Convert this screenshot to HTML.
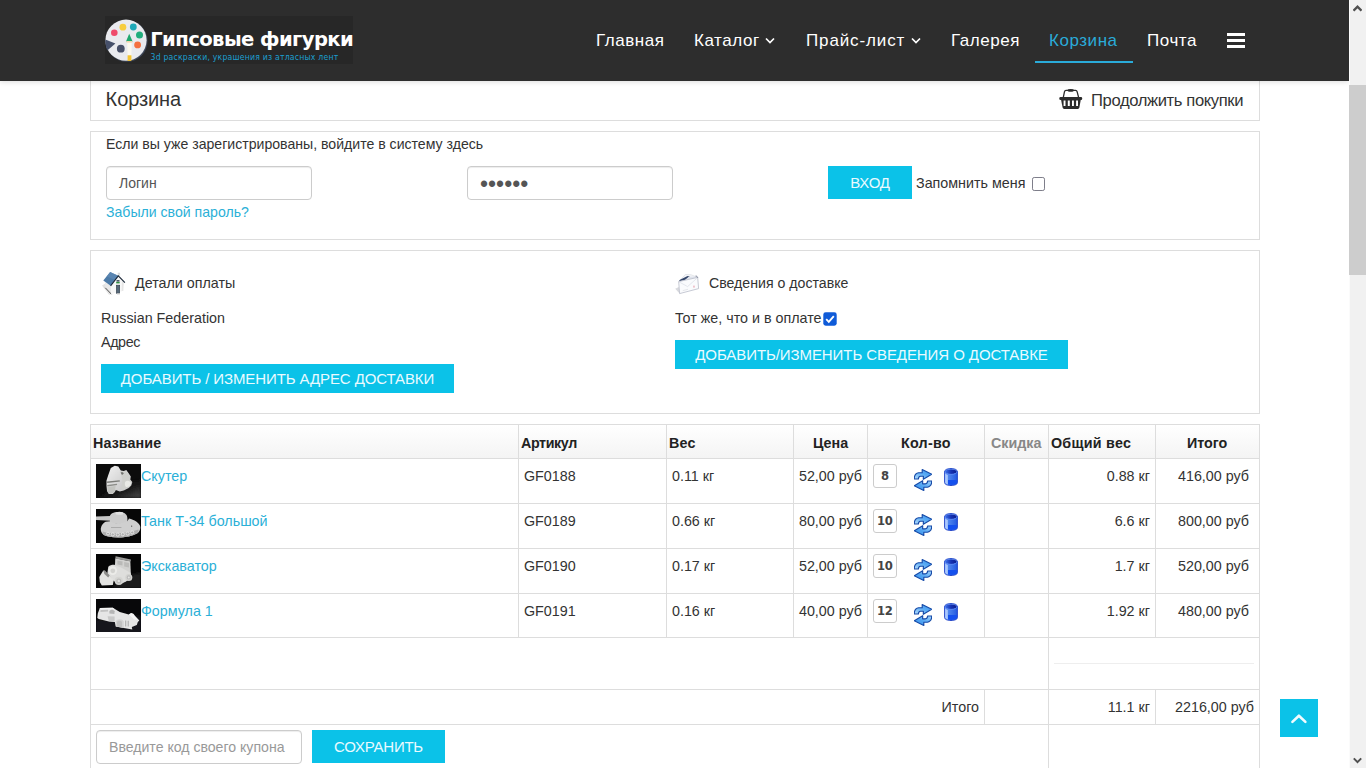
<!DOCTYPE html>
<html lang="ru">
<head>
<meta charset="utf-8">
<title>Корзина — Гипсовые фигурки</title>
<style>
*{box-sizing:border-box;margin:0;padding:0}
html,body{width:1366px;height:768px;overflow:hidden;background:#fff}
body{font-family:"Liberation Sans",sans-serif;font-size:15px;color:#333;position:relative}
a{text-decoration:none;color:#2bb0d7}
.abs{position:absolute;white-space:nowrap}

/* header */
#hdr{position:absolute;left:0;top:0;width:1349px;height:81px;background:#2d2d2d;z-index:5;box-shadow:0 1px 5px rgba(0,0,0,.14)}
#hdrshadow{position:absolute;left:0;top:81px;width:1349px;height:6px;background:linear-gradient(#e4e4e4,#fff);z-index:4;opacity:.0}
#logo{position:absolute;left:105px;top:16px;width:248px;height:48px;background:#272727}
#logo .t1{position:absolute;left:45.2px;top:12.2px;font:bold 19.6px/24px "DejaVu Sans","Liberation Sans",sans-serif;color:#fff;letter-spacing:-.58px;white-space:nowrap}
#logo .t2{position:absolute;left:45.5px;top:35.6px;font:8.6px/11px "DejaVu Sans Condensed","DejaVu Sans","Liberation Sans",sans-serif;color:#1b9fd0;white-space:nowrap;letter-spacing:.21px}
.nav{position:absolute;top:30.3px;font-size:17px;line-height:22px;color:#fff;white-space:nowrap;letter-spacing:.55px}
.nav.act{color:#2aabd9}
#navline{position:absolute;left:1035px;top:61px;width:98px;height:2.4px;background:#2aabd9}
.chev{position:absolute;top:37px;width:10px;height:8px}
#burger{position:absolute;left:1227px;top:32.5px;width:18px;height:15px}
#burger i{position:absolute;left:0;width:18px;height:3px;background:#fff}

/* scrollbar */
#sb{position:absolute;left:1349px;top:0;width:17px;height:768px;background:#f1f1f1;z-index:9;box-shadow:inset 1px 0 0 #fbfbfb}
#sb .th{position:absolute;left:0;top:85px;width:17px;height:190px;background:#cdcdcd}

/* boxes */
.box{position:absolute;left:90px;width:1170px;border:1px solid #ddd;background:#fff}
.btn{position:absolute;background:#0bc2e8;color:#eafaff;font-size:16px;line-height:30px;text-align:center;white-space:nowrap;height:30px}
.inp{position:absolute;border:1px solid #ccc;border-radius:4px;background:#fff;height:34px;font-size:15px;line-height:32px;padding-left:12px;color:#555;white-space:nowrap;box-shadow:inset 0 1px 1px rgba(0,0,0,.075)}


/* table */
#tbl{position:absolute;left:90px;top:424px;width:1170px;height:344px;font-size:14.3px;color:#333}
#tbl .thbg{position:absolute;left:1px;top:1px;width:1168px;height:33px;background:linear-gradient(#fff,#f4f4f4)}
#tbl .ln{position:absolute;background:#ddd}
#tbl .ln2{position:absolute;background:#eee}
#tbl .tx{position:absolute;white-space:nowrap;line-height:20px;font-size:14.3px}
#tbl .tx.b{font-weight:bold;color:#222}
#tbl .tx.g{color:#888}
#tbl .thumb{position:absolute;width:45px;height:34px;background:#0c0c0c;overflow:hidden}
#tbl .qty{position:absolute;width:24px;height:24px;border:1px solid #ccc;border-radius:3px;font:bold 11.6px/22px "DejaVu Sans","Liberation Sans",sans-serif;text-align:center;color:#444;background:#fff;letter-spacing:-.3px;text-indent:-.3px}
#tbl .ic{position:absolute}
</style>
</head>
<body>

<div id="hdr">
  <div id="logo">
    <svg width="48" height="48" viewBox="0 0 48 48" style="position:absolute;left:0;top:0">
      <circle cx="21.8" cy="25" r="20.8" fill="#3d4657"/>
      <circle cx="21" cy="24.2" r="20.6" fill="#e9eaee"/>
      <path d="M0.3 23.5 L10.4 27.4 L2.3 34.6 C0.8 31 0.2 27 0.3 23.5 Z" fill="#46506a"/>
      <circle cx="9.3" cy="16.8" r="3.3" fill="#ef4a6b"/>
      <circle cx="17.9" cy="11.2" r="3.4" fill="#f7cd3e"/>
      <circle cx="28.3" cy="11" r="3.4" fill="#1fa9b8"/>
      <circle cx="34.5" cy="19.1" r="3.5" fill="#22ad7d"/>
      <circle cx="32.6" cy="28.9" r="3.4" fill="#f4703f"/>
      <circle cx="15.8" cy="32.7" r="3.9" fill="#474f68"/>
      <path d="M22.2 25 L26.8 25 L26.4 39.5 L22.6 39.5 Z" fill="#fbf8ee"/>
      <path d="M24.2 17.8 L27.6 25.6 L21 25.6 Z" fill="#1fa86f"/>
      <path d="M21.4 25 h5.8 v1.6 h-5.8z" fill="#f2d5b0"/>
      <rect x="22.6" y="39.3" width="3.8" height="5.6" fill="#f5c531"/>
    </svg>
    <div class="t1">Гипсовые фигурки</div>
    <div class="t2">3d раскраски, украшения из атласных лент</div>
  </div>
  <div class="nav" style="left:596px">Главная</div>
  <div class="nav" style="left:694px">Каталог</div>
  <svg class="chev" style="left:765px" viewBox="0 0 10 8"><path d="M1 1.5 L5 5.5 L9 1.5" fill="none" stroke="#fff" stroke-width="1.7"/></svg>
  <div class="nav" style="left:806px;letter-spacing:.87px">Прайс-лист</div>
  <svg class="chev" style="left:911px" viewBox="0 0 10 8"><path d="M1 1.5 L5 5.5 L9 1.5" fill="none" stroke="#fff" stroke-width="1.7"/></svg>
  <div class="nav" style="left:951px">Галерея</div>
  <div class="nav act" style="left:1049px">Корзина</div>
  <div id="navline"></div>
  <div class="nav" style="left:1147px">Почта</div>
  <div id="burger"><i style="top:0"></i><i style="top:6px"></i><i style="top:12px"></i></div>
</div>

<div id="sb">
  <div class="th"></div>
  <svg style="position:absolute;left:4px;top:3.9px" width="9" height="8" viewBox="0 0 9 8"><path d="M0.5 6.7 L4.5 2.7 L8.5 6.7" fill="none" stroke="#505050" stroke-width="2.4"/></svg>
  <svg style="position:absolute;left:4px;top:756.5px" width="9" height="7" viewBox="0 0 9 7"><path d="M0.8 1.4 L4.5 5.1 L8.2 1.4" fill="none" stroke="#505050" stroke-width="2"/></svg>
</div>

<!-- title box -->
<div class="box" style="top:76px;height:45px">
  <div class="abs" id="t_korz" style="left:14.6px;top:9.5px;font-size:20px;line-height:24px;color:#333;letter-spacing:-.1px">Корзина</div>
  <svg class="abs" id="i_basket" style="left:968.2px;top:12px" width="24" height="21" viewBox="0 0 24 21">
    <path d="M4.3 8.4 L5.5 2.6 C5.7 1.7 6.2 1.3 7 1.3 H16.6 C17.4 1.3 17.9 1.7 18.1 2.6 L19.6 8.4" fill="none" stroke="#2b2b2b" stroke-width="1.3"/>
    <ellipse cx="11.7" cy="1.4" rx="3.2" ry="1.3" fill="#2b2b2b"/>
    <rect x="0.3" y="8.1" width="22.9" height="2.8" rx="1.2" fill="#2b2b2b"/>
    <path d="M2 10.6 H21.8 L20.4 18.6 C20.2 19.5 19.6 19.9 18.8 19.9 H5.2 C4.4 19.9 3.8 19.5 3.6 18.6 Z" fill="#2b2b2b"/>
    <path d="M4.6 11.4 h1.9 v5.7 h-1.9z M8.8 11.4 h2 v5.7 h-2z M13 11.4 h1.9 v5.7 h-1.9z M17.1 11.4 h1.9 v5.7 h-1.9z" fill="#fff"/>
  </svg>
  <div class="abs" id="t_prod" style="left:1000px;top:13.6px;font-size:16.6px;line-height:20px;color:#333;letter-spacing:-.38px">Продолжить покупки</div>
</div>

<!-- login box -->
<div class="box" style="top:131px;height:109px">
  <div class="abs" id="t_esli" style="left:15px;top:2.4px;font-size:14.1px;line-height:20px">Если вы уже зарегистрированы, войдите в систему здесь</div>
  <div class="inp" id="in_login" style="left:15px;top:34px;width:206px;font-size:14px">Логин</div>
  <div class="inp" id="in_pass" style="left:376px;top:34px;width:206px;font-size:23px;letter-spacing:0;line-height:35px">••••••</div>
  <div class="btn" id="b_vhod" style="left:737px;top:34px;width:84px;height:33px;line-height:33px;font-size:15px;letter-spacing:-.2px">ВХОД</div>
  <div class="abs" id="t_zap" style="left:825px;top:41.2px;font-size:14.3px;line-height:20px">Запомнить меня</div>
  <div class="abs" id="cb1" style="left:940.6px;top:45.2px;width:13.4px;height:13.4px;border:1.7px solid #7e7e8a;border-radius:2.2px;background:#fff"></div>
  <a class="abs" id="t_zab" style="left:15px;top:70px;font-size:14.1px;line-height:20px">Забыли свой пароль?</a>
</div>

<!-- address box -->
<div class="box" style="top:250px;height:164px">
  <svg class="abs" id="i_house" style="left:10px;top:21px" width="25" height="25" viewBox="0 0 25 25">
    <path d="M1 13.4 L4.4 11.6 L10.2 22.3 L8 22.8 Z" fill="#e2e2e2"/>
    <path d="M3.9 10.2 L10 13.7 L10 22.1 L4.4 16 Z" fill="#e9e9e9"/>
    <path d="M4.3 15.8 L10.4 22.2" stroke="#2a2a2a" stroke-width=".8" fill="none"/>
    <rect x="17" y="1" width="1.9" height="2.2" fill="#e8e8e8" stroke="#bbb" stroke-width=".3"/>
    <path d="M17.3 4.4 L22.8 10.3 L22.3 18.8 L10 22.1 L10 13.6 Z" fill="#f7f7f7"/>
    <path d="M21 9 L22.8 10.3 L22.3 18.8 L20.6 19.3 Z" fill="#e6e6e6"/>
    <path d="M9.1 0.1 L17.3 3.8 L9.5 13.7 L2.3 8.5 Z" fill="#4d7ba8"/>
    <path d="M9.1 0.1 L17.3 3.8 L14 8 L6 4.4 Z" fill="#5f8ab5" opacity=".7"/>
    <path d="M9.6 13.8 L17.3 3.9 L23.9 10.6" fill="none" stroke="#1b2838" stroke-width="1.1" stroke-linejoin="miter"/>
    <rect x="15.5" y="8.1" width="3" height="1.5" fill="#3a4858"/>
    <rect x="15.2" y="9.9" width="3.5" height="1.5" fill="#2f8f40"/>
    <rect x="15.4" y="13.2" width="3.3" height="8" fill="#566878" stroke="#2e3a46" stroke-width=".6"/>
    <rect x="16" y="21.2" width="3" height="1.2" fill="#c9c9c9"/>
  </svg>
  <div class="abs" id="t_det" style="left:44px;top:22px;font-size:14.3px;line-height:20px">Детали оплаты</div>
  <div class="abs" id="t_rus" style="left:10px;top:57px;font-size:14.3px;line-height:20px">Russian Federation</div>
  <div class="abs" id="t_adr" style="left:10px;top:81px;font-size:14.3px;line-height:20px;letter-spacing:-.4px">Адрес</div>
  <div class="btn" id="b_add1" style="left:10px;top:113px;width:353px;height:29px;line-height:29px;font-size:15px;letter-spacing:-.1px">ДОБАВИТЬ / ИЗМЕНИТЬ АДРЕС ДОСТАВКИ</div>
  <svg class="abs" id="i_env" style="left:584px;top:23px" width="25" height="21" viewBox="0 0 25 21">
    <path d="M0.2 14.8 L3.9 13 L4.8 19.8 Z" fill="#d9dade"/>
    <path d="M3.7 7.6 L10.5 0.4 L16.1 0.8 L22.7 3.4 Z" fill="#f4f5f8" stroke="#d4d6de" stroke-width=".6"/>
    <path d="M3.9 7.3 L5 5.8 L12.6 2 L14.8 2.5 L9.4 6.3 Z" fill="#34466a"/>
    <path d="M13.6 2.7 L20.4 2.6 L22.4 3.6 L11 5.6 Z" fill="#dfe3ec"/>
    <path d="M3.7 7.6 L22.7 3.4 L23.6 14.6 L4.6 19.6 Z" fill="#fafbfd" stroke="#b9bdc9" stroke-width=".8" stroke-linejoin="round"/>
    <path d="M3.9 7.8 L12.6 12.6 L22.6 3.6" fill="none" stroke="#d9dce5" stroke-width=".7"/>
    <path d="M20.6 2 C21.8 2 22.6 2.8 22.7 3.8" fill="none" stroke="#7a8194" stroke-width="1"/>
    <rect x="18" y="11.6" width="1.9" height="2" fill="#efc3cc"/>
    <path d="M7.8 16.6 L13 15.3" stroke="#d4d6dd" stroke-width=".6"/>
  </svg>
  <div class="abs" id="t_sved" style="left:618px;top:21.5px;font-size:14.15px;line-height:20px">Сведения о доставке</div>
  <div class="abs" id="t_tot" style="left:584px;top:57px;font-size:14.3px;line-height:20px">Тот же, что и в оплате</div>
  <svg class="abs" id="cb2" style="left:732px;top:61px" width="14" height="14" viewBox="0 0 14 14"><rect x=".3" y=".3" width="13.4" height="13.4" rx="2.4" fill="#0f5bd8"/><path d="M3.2 7.2 L5.8 9.8 L10.8 4.2" fill="none" stroke="#fff" stroke-width="1.9"/></svg>
  <div class="btn" id="b_add2" style="left:584px;top:89px;width:393px;height:29px;line-height:29px;font-size:15px;letter-spacing:-.08px">ДОБАВИТЬ/ИЗМЕНИТЬ СВЕДЕНИЯ О ДОСТАВКЕ</div>
</div>

<svg width="0" height="0" style="position:absolute">
  <defs>
    <linearGradient id="gb" x1="0" y1="1" x2="1" y2="0"><stop offset="0" stop-color="#b5defd"/><stop offset=".55" stop-color="#59aaf3"/><stop offset="1" stop-color="#3a93ee"/></linearGradient>
    <linearGradient id="gb2" x1="1" y1="0" x2="0" y2="1"><stop offset="0" stop-color="#a9d7fc"/><stop offset=".55" stop-color="#4fa3f2"/><stop offset="1" stop-color="#3a93ee"/></linearGradient>
    <linearGradient id="gt" x1="0" y1="0" x2="1" y2="0"><stop offset="0" stop-color="#7da6f8"/><stop offset=".3" stop-color="#4f86ee"/><stop offset="1" stop-color="#2259e0"/></linearGradient>
    <linearGradient id="gt2" x1="0" y1="0" x2="1" y2="0"><stop offset="0" stop-color="#3f72ea"/><stop offset=".5" stop-color="#1432b4"/><stop offset="1" stop-color="#0a1c8c"/></linearGradient>
    <g id="refresh">
      <path d="M0.3 10 C0.2 7.6 1.4 4.4 4.6 3.8 L8.2 3.7 L8.2 0.6 L17.8 5.3 L9.3 10.3 L9.4 7.2 L6.4 7.2 C5 7.4 4.4 8.6 4.4 10 Z" fill="url(#gb)" stroke="#164aa8" stroke-width="1.15" stroke-linejoin="round"/>
      <path d="M17.7 12 C17.8 14.4 16.6 17.6 13.4 18.2 L9.8 18.3 L9.8 21.4 L0.2 16.7 L8.7 11.7 L8.6 14.8 L11.6 14.8 C13 14.6 13.6 13.4 13.6 12 Z" fill="url(#gb2)" stroke="#164aa8" stroke-width="1.15" stroke-linejoin="round"/>
    </g>
    <g id="trash">
      <path d="M0.6 3.6 V14.6 C0.6 16.4 3.6 17.5 7 17.5 C10.4 17.5 13.4 16.4 13.4 14.6 V3.6 Z" fill="url(#gt)" stroke="#1a3cc4" stroke-width=".9"/>
      <path d="M4 12 H13 V14.8 C12.6 16 10 17 7 17 C5.8 17 4.8 16.9 4 16.6 Z" fill="#1450ee"/>
      <path d="M1.2 5.6 C2 6.4 3 6.8 3.8 7 V16.4 C2.4 16 1.3 15.4 1.2 14.6 Z" fill="#b9d2ff" opacity=".85"/>
      <ellipse cx="7" cy="3.7" rx="6" ry="2.7" fill="url(#gt2)" stroke="#5d8cf6" stroke-width="1"/>
      <path d="M0.6 3.7 C0.6 1.7 3.5 0.5 7 0.5 C10.5 0.5 13.4 1.7 13.4 3.7" fill="none" stroke="#2347c8" stroke-width=".9"/>
    </g>
    <filter id="bl" x="-10%" y="-10%" width="120%" height="120%"><feGaussianBlur stdDeviation="0.5"/></filter>
    <filter id="bl2" x="-20%" y="-20%" width="140%" height="140%"><feGaussianBlur stdDeviation="1.6"/></filter>
    <linearGradient id="fl0" x1="0" y1="0" x2="1" y2="1"><stop offset="0" stop-color="#0a0a0a"/><stop offset=".55" stop-color="#151515"/><stop offset="1" stop-color="#4a4a4a"/></linearGradient>
    <linearGradient id="wh" x1="0" y1="0" x2="1" y2="1"><stop offset="0" stop-color="#f1f1f1"/><stop offset="1" stop-color="#bdbdbd"/></linearGradient>
    <g id="fig0">
      <rect width="45" height="34" fill="#0c0c0c"/>
      <path d="M22 18.5 L45 16.5 L45 34 L4 34 Z" fill="url(#fl0)" filter="url(#bl2)"/>
      <g filter="url(#bl)">
        <path d="M14.8 3.9 L18.8 1.7 L22.3 2.4 L24.8 6.4 L27.8 6.9 L30.3 5.9 L32.8 9.4 L34.8 12.4 L34.3 15.4 L36.3 17.9 L35.3 21.4 L32.8 23.9 L27.8 26.4 L23.8 27.4 L19.8 25.9 L18.8 27.9 L16.8 29.9 L12.8 29.9 L11 26.9 L10.5 21.9 L10.5 16.4 L12.3 10.9 Z" fill="url(#wh)"/>
        <path d="M24.2 7 L27.8 7.6 L30 7 L32.4 10 L34 13 L33.6 15.6 L35.4 18 L34.6 21 L32.4 23.2 L28 25.4 L25.4 25.8 L26.4 16 Z" fill="#cfd0cc"/>
        <path d="M11 17.4 L23.6 16.2 L24 17.5 L11.2 18.9 Z" fill="#7b7c78"/>
        <path d="M11.2 21 L20.8 19.8 L21.2 21 L11.4 22.4 Z" fill="#8c8d89"/>
        <path d="M11.4 22.8 L19.6 22 L19 27.6 L16.6 29.6 L13 29.6 L11.3 26.6 Z" fill="#c3c4c0"/>
        <path d="M24.6 8.6 C26 8 27.4 8.4 27.8 9.4 L26 11 Z" fill="#6f706c"/>
        <path d="M29.5 17.5 C31.5 16 34.6 17 35 19.6 C34.6 22 32.4 23.4 30 23 C28.6 21.4 28.4 19 29.5 17.5 Z" fill="#e9eae6"/>
      </g>
    </g>
    <g id="fig1">
      <rect width="45" height="34" fill="#070707"/>
      <g filter="url(#bl)">
        <path d="M0 7.5 L14.4 6.9 L14.6 11.8 L0 11.1 Z" fill="#c6c6c6"/>
        <path d="M13.8 8 C13.6 4.6 17.6 3 22.4 2.9 C27.4 2.8 31 4.6 31.3 8.4 L31.6 13.6 C28 15.2 18 15.4 14 13.8 Z" fill="#cccccc"/>
        <ellipse cx="23.4" cy="4.3" rx="3.9" ry="1.5" fill="#e2e2e2"/>
        <path d="M4.8 19.4 C5.4 16 7.4 13.8 9.6 12.8 L14 12.2 C18 15 28 14.8 31.6 12 L33 9.6 C38 10.6 43.6 14 44.3 17.9 C44.4 20.6 43.4 22.6 41.8 23.9 C37 27 29 28.3 22.8 28.4 C16 28.5 10.6 27.4 7.8 25.9 C5.4 24.2 4.6 21.6 4.8 19.4 Z" fill="#cfcfcf"/>
        <path d="M6.6 22.6 C14 25.2 32 24.8 42.4 20.6 C42.6 22 42.4 23 41.8 23.9 C37 27 29 28.3 22.8 28.4 C16 28.5 10.6 27.4 7.8 25.9 C7 24.8 6.6 23.6 6.6 22.6 Z" fill="#aeaeae"/>
        <g fill="none" stroke="#e3e3e3" stroke-width="1"><circle cx="12" cy="24.6" r="1.5"/><circle cx="16.8" cy="25.4" r="1.6"/><circle cx="21.8" cy="25.6" r="1.6"/><circle cx="26.8" cy="25.3" r="1.6"/><circle cx="31.6" cy="24.6" r="1.6"/><circle cx="36.2" cy="23.4" r="1.6"/></g>
        <path d="M15 18.2 h10.4 v.8 h-10.4z" fill="#a2a2a2"/>
        <path d="M35 16.4 h1.2 v1.6 h-1.2z" fill="#777"/>
      </g>
    </g>
    <g id="fig2">
      <rect width="45" height="34" fill="#060606"/>
      <path d="M28 22 L45 19 L45 34 L16 34 Z" fill="#1e1e1e" filter="url(#bl2)"/>
      <g filter="url(#bl)">
        <path d="M19.3 4.2 L34.3 7.2 L34.8 18.9 L31 22 L18.8 13.6 Z" fill="#d2d2d0"/>
        <path d="M19.6 2.2 L34.9 5.6 L34.7 7.6 L19.4 4.4 Z" fill="#9a9a98"/>
        <path d="M21.4 6.4 L26.6 7.6 L26.4 11.6 L21.4 10.4 Z" fill="#b9b9b7"/>
        <path d="M28.2 8 L33 9 L33 13.6 L28.2 12.4 Z" fill="#bcbcba"/>
        <path d="M12.3 12.8 C14 11 17 10.6 18.8 10.9 L26 14 L34.8 18.9 L35.4 24 L30 27.6 L24 30.6 L17.8 27 L11.3 19.4 Z" fill="#dededc"/>
        <circle cx="16.8" cy="16.6" r="4.3" fill="#ecece9"/>
        <circle cx="16.8" cy="16.8" r="2.4" fill="#d2d2cf"/>
        <path d="M3.3 22.9 L7.3 16.4 L11.3 19.4 L17.8 25.9 L16.8 30.9 L5.8 31.4 L3.8 27.9 Z" fill="#e4e4e1"/>
        <path d="M7.3 16.4 L8.8 16.2 L13.6 21.6 L12.2 23.6 L8.4 20 Z" fill="#8d8d8a"/>
        <circle cx="22.8" cy="26.9" r="4.1" fill="#d5d5d2"/><circle cx="22.8" cy="26.9" r="2.5" fill="#bdbdba"/><circle cx="22.8" cy="26.9" r="1.2" fill="#e6e6e3"/>
        <circle cx="32.8" cy="23.4" r="3.5" fill="#d2d2cf"/><circle cx="32.8" cy="23.4" r="2.1" fill="#bababa"/><circle cx="32.8" cy="23.4" r="1" fill="#e4e4e1"/>
      </g>
    </g>
    <g id="fig3">
      <rect width="45" height="34" fill="#08080a"/>
      <path d="M0 21 L45 17 L45 34 L0 34 Z" fill="#17161d" filter="url(#bl2)"/>
      <g filter="url(#bl)">
        <path d="M1.3 18.9 L1.8 14.4 L3.8 8.9 L16.8 8.7 L23.8 12.9 L32.8 15.4 L35.8 13.9 L38.8 16.9 L43.3 21.4 L41.8 22.9 L40.8 25.9 L35.8 27.9 L36.3 30.4 L27.8 28.9 L19.8 27.4 L18.8 22.9 L12.8 22.4 L2.8 19.9 Z" fill="#e6e6e6"/>
        <path d="M3.8 8.9 L16.8 8.7 L18.6 10.2 L5 10.8 Z" fill="#f4f4f4"/>
        <path d="M4.6 11 L12 10.8 L12 12.6 L4.4 13 Z" fill="#c3c3c3"/>
        <path d="M13.4 12.6 C14 10.2 17.4 10 18.6 12.2 L18.4 15 L13.4 14.6 Z" fill="#b6b6b6"/>
        <path d="M11.6 17.2 L18.6 17.6 L18.6 22.4 L12.8 22.2 Z" fill="#c9c9c9"/>
        <path d="M19.8 27.4 L19.8 22.4 C20.6 19.6 26.6 19.4 27.8 22.4 L27.8 28.9 Z" fill="#d3d3d3"/>
        <path d="M21 27.4 L21 23 C21.8 21.2 25.2 21.2 26 23 L26 28.2 Z" fill="#c1c1c1"/>
        <path d="M29 21.6 h1.3 v6 h-1.3z M31.6 21.8 h1.3 v5.6 h-1.3z" fill="#b4b4b4"/>
        <path d="M33 15.6 C34.6 13.4 37.6 14 38.6 16.6 L42.6 21 L38 20.4 Z" fill="#f6f6f6"/>
      </g>
    </g>
  </defs>
</svg>
<!-- cart table -->
<div id="tbl">
<div class="thbg"></div>
<div class="ln" style="left:0px;top:0px;width:1170px;height:1px"></div>
<div class="ln" style="left:0px;top:34px;width:1170px;height:1px"></div>
<div class="ln" style="left:0px;top:79px;width:1170px;height:1px"></div>
<div class="ln" style="left:0px;top:124px;width:1170px;height:1px"></div>
<div class="ln" style="left:0px;top:169px;width:1170px;height:1px"></div>
<div class="ln" style="left:0px;top:213px;width:1170px;height:1px"></div>
<div class="ln" style="left:0px;top:265px;width:1170px;height:1px"></div>
<div class="ln" style="left:0px;top:300px;width:1170px;height:1px"></div>
<div class="ln" style="left:0px;top:0px;width:1px;height:344px"></div>
<div class="ln" style="left:1169px;top:0px;width:1px;height:344px"></div>
<div class="ln" style="left:428px;top:0px;width:1px;height:213px"></div>
<div class="ln" style="left:576px;top:0px;width:1px;height:213px"></div>
<div class="ln" style="left:703px;top:0px;width:1px;height:213px"></div>
<div class="ln" style="left:777px;top:0px;width:1px;height:213px"></div>
<div class="ln" style="left:894px;top:0px;width:1px;height:213px"></div>
<div class="ln" style="left:958px;top:0px;width:1px;height:213px"></div>
<div class="ln" style="left:1065px;top:0px;width:1px;height:213px"></div>
<div class="ln" style="left:894px;top:265px;width:1px;height:35px"></div>
<div class="ln" style="left:958px;top:213px;width:1px;height:131px"></div>
<div class="ln" style="left:1065px;top:265px;width:1px;height:35px"></div>
<div class="ln2" style="left:964px;top:239px;width:200px;height:1px"></div>
<div class="tx b" style="left:3px;top:9px;letter-spacing:.1px">Название</div>
<div class="tx b" style="left:431px;top:9px;letter-spacing:-.4px">Артикул</div>
<div class="tx b" style="left:579px;top:9px;letter-spacing:.25px">Вес</div>
<div class="tx b" style="left:723px;top:9px;">Цена</div>
<div class="tx b" style="left:811px;top:9px;letter-spacing:.25px">Кол-во</div>
<div class="tx b g" style="left:901px;top:9px;">Скидка</div>
<div class="tx b" style="left:961px;top:9px;letter-spacing:.25px">Общий вес</div>
<div class="tx b" style="left:1097px;top:9px;">Итого</div>
<div class="thumb" style="left:6px;top:40px"><svg width="45" height="34" viewBox="0 0 45 34"><use href="#fig0"/></svg></div>
<div class="tx " style="left:51px;top:42px;"><a>Скутер</a></div>
<div class="tx " style="left:434px;top:42px;">GF0188</div>
<div class="tx " style="left:582px;top:42px;">0.11 кг</div>
<div class="tx " style="right:398px;top:42px;">52,00 руб</div>
<div class="qty" style="left:783px;top:40px">8</div>
<svg class="ic" style="left:824px;top:44.9px" width="18" height="22" viewBox="0 0 18 22"><use href="#refresh"/></svg>
<svg class="ic" style="left:854px;top:44.0px" width="14" height="18" viewBox="0 0 14 18"><use href="#trash"/></svg>
<div class="tx " style="right:110px;top:42px;">0.88 кг</div>
<div class="tx " style="right:11px;top:42px;">416,00 руб</div>
<div class="thumb" style="left:6px;top:85px"><svg width="45" height="34" viewBox="0 0 45 34"><use href="#fig1"/></svg></div>
<div class="tx " style="left:51px;top:87px;"><a>Танк Т-34 большой</a></div>
<div class="tx " style="left:434px;top:87px;">GF0189</div>
<div class="tx " style="left:582px;top:87px;">0.66 кг</div>
<div class="tx " style="right:398px;top:87px;">80,00 руб</div>
<div class="qty" style="left:783px;top:85px">10</div>
<svg class="ic" style="left:824px;top:89.9px" width="18" height="22" viewBox="0 0 18 22"><use href="#refresh"/></svg>
<svg class="ic" style="left:854px;top:89.0px" width="14" height="18" viewBox="0 0 14 18"><use href="#trash"/></svg>
<div class="tx " style="right:110px;top:87px;">6.6 кг</div>
<div class="tx " style="right:11px;top:87px;">800,00 руб</div>
<div class="thumb" style="left:6px;top:130px"><svg width="45" height="34" viewBox="0 0 45 34"><use href="#fig2"/></svg></div>
<div class="tx " style="left:51px;top:132px;"><a>Экскаватор</a></div>
<div class="tx " style="left:434px;top:132px;">GF0190</div>
<div class="tx " style="left:582px;top:132px;">0.17 кг</div>
<div class="tx " style="right:398px;top:132px;">52,00 руб</div>
<div class="qty" style="left:783px;top:130px">10</div>
<svg class="ic" style="left:824px;top:134.9px" width="18" height="22" viewBox="0 0 18 22"><use href="#refresh"/></svg>
<svg class="ic" style="left:854px;top:134.0px" width="14" height="18" viewBox="0 0 14 18"><use href="#trash"/></svg>
<div class="tx " style="right:110px;top:132px;">1.7 кг</div>
<div class="tx " style="right:11px;top:132px;">520,00 руб</div>
<div class="thumb" style="left:6px;top:175px;height:33px"><svg width="45" height="34" viewBox="0 0 45 34"><use href="#fig3"/></svg></div>
<div class="tx " style="left:51px;top:177px;"><a>Формула 1</a></div>
<div class="tx " style="left:434px;top:177px;">GF0191</div>
<div class="tx " style="left:582px;top:177px;">0.16 кг</div>
<div class="tx " style="right:398px;top:177px;">40,00 руб</div>
<div class="qty" style="left:783px;top:175px">12</div>
<svg class="ic" style="left:824px;top:179.9px" width="18" height="22" viewBox="0 0 18 22"><use href="#refresh"/></svg>
<svg class="ic" style="left:854px;top:179.0px" width="14" height="18" viewBox="0 0 14 18"><use href="#trash"/></svg>
<div class="tx " style="right:110px;top:177px;">1.92 кг</div>
<div class="tx " style="right:11px;top:177px;">480,00 руб</div>
<div class="tx " style="right:281px;top:273.2px;">Итого</div>
<div class="tx " style="right:110px;top:273.2px;">11.1 кг</div>
<div class="tx " style="right:6px;top:273.2px;">2216,00 руб</div>
<div class="inp" id="in_coupon" style="left:6px;top:306px;width:206px;color:#999;font-size:14.1px">Введите код своего купона</div>
<div class="btn" id="b_save" style="left:222px;top:306px;width:133px;height:33px;line-height:33px;font-size:15px;letter-spacing:-.25px">СОХРАНИТЬ</div>
</div>
<div id="totop" style="position:absolute;left:1280px;top:699px;width:38px;height:38px;background:#0bc2e8;z-index:6">
  <svg width="38" height="38" viewBox="0 0 38 38"><path d="M12.4 22.9 L18.9 16.7 L25.4 22.9" fill="none" stroke="#f2fcff" stroke-width="2.6" stroke-linecap="round" stroke-linejoin="round"/></svg>
</div>
</body>
</html>
